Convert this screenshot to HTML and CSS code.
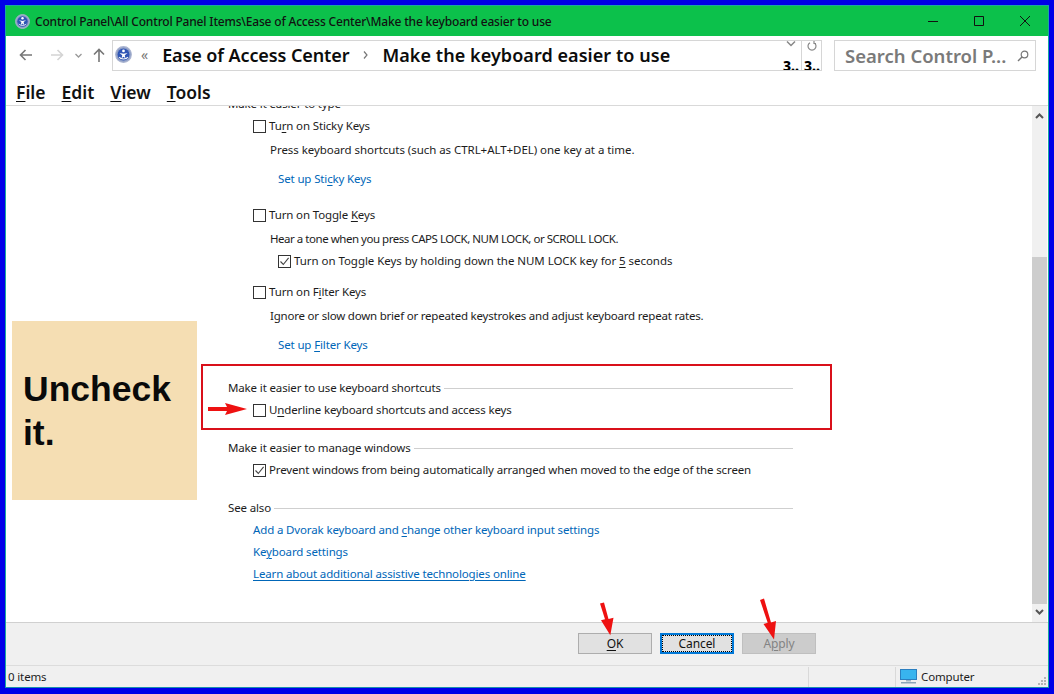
FILE: index.html
```html
<!DOCTYPE html>
<html lang="en">
<head>
<meta charset="utf-8">
<title>Make the keyboard easier to use</title>
<link rel="stylesheet" href="styles.css">
</head>
<body>
<svg class="defs" width="0" height="0" aria-hidden="true">
  <symbol id="ease" viewBox="0 0 16 16">
    <circle cx="8" cy="8" r="7.400" fill="#8f9fc6" stroke="#aab4d0" stroke-width="1"/>
    <circle cx="8" cy="8" r="5.600" fill="#2f55b5"/>
    <circle cx="8" cy="4.600" r="1.300" fill="#fff"/>
    <path d="M4.200 6.600 8 7.400l3.800-.8-2.600 2 .6 3L8 10l-1.800 1.600.6-3z" fill="#fff"/>
    <path d="M4 10.500c1.400 2.200 6.600 2.200 8 0" fill="none" stroke="#fff" stroke-width="1"/>
  </symbol>
  <symbol id="tick" viewBox="0 0 11 11">
    <path d="M1.500 5.500 4.300 8.500 9.600 1.800" fill="none" stroke="#444" stroke-width="1.100"/>
  </symbol>
</svg>

<div class="window">
  <header class="titlebar">
    <svg class="title-icon"><use href="#ease"/></svg>
    <span class="title-text">Control Panel\All Control Panel Items\Ease of Access Center\Make the keyboard easier to use</span>
    <div class="controls">
      <svg width="12" height="12" viewBox="0 0 12 12"><path d="M1 6.500h10" stroke="#111" fill="none"/></svg>
      <svg width="12" height="12" viewBox="0 0 12 12"><path d="M1.500 1.500h9v9h-9z" stroke="#111" fill="none"/></svg>
      <svg width="12" height="12" viewBox="0 0 12 12"><path d="M1 1l10 10M11 1 1 11" stroke="#111" fill="none"/></svg>
    </div>
  </header>

  <div class="navbar">
    <div class="nav-buttons">
      <svg class="nav-back" width="14" height="12" viewBox="0 0 14 12"><path d="M13 6H2M6.500 1 1.500 6l5 5" fill="none" stroke="#777" stroke-width="1.600"/></svg>
      <svg class="nav-fwd" width="14" height="12" viewBox="0 0 14 12"><path d="M1 6h11M7.500 1l5 5-5 5" fill="none" stroke="#d4d4d4" stroke-width="1.600"/></svg>
      <svg class="nav-recent" width="7" height="5" viewBox="0 0 7 5"><path d="M.5 1 3.500 4l3-3" fill="none" stroke="#999" stroke-width="1.300"/></svg>
      <svg class="nav-up" width="12" height="14" viewBox="0 0 12 14"><path d="M6 14V2M1 6.500l5-5 5 5" fill="none" stroke="#777" stroke-width="1.600"/></svg>
    </div>
    <div class="address">
      <svg class="addr-icon"><use href="#ease"/></svg>
      <span class="addr-more">«</span>
      <span class="crumb crumb-first">Ease of Access Center</span>
      <svg class="crumb-sep" width="5" height="8" viewBox="0 0 5 8"><path d="M1 .5 4 4 1 7.500" fill="none" stroke="#777" stroke-width="1.200"/></svg>
      <span class="crumb crumb-last">Make the keyboard easier to use</span>
      <div class="addr-cell addr-drop">
        <svg width="10" height="6" viewBox="0 0 10 6"><path d="M1 .5 5 4.500 9 .5" fill="none" stroke="#888" stroke-width="1.500"/></svg>
        <span class="frag">3..</span>
      </div>
      <div class="addr-cell addr-refresh">
        <svg width="10" height="10" viewBox="0 0 10 10"><path d="M3 1.700a4 4 0 1 0 4 0M7 0v2.500h2" fill="none" stroke="#888" stroke-width="1.200"/></svg>
        <span class="frag">3..</span>
      </div>
    </div>
    <div class="search">
      <span class="search-text">Search Control P...</span>
      <svg width="12" height="12" viewBox="0 0 12 12"><circle cx="7.500" cy="4.500" r="3.300" fill="none" stroke="#777" stroke-width="1.200"/><path d="M5 7 1 11" stroke="#777" stroke-width="1.500"/></svg>
    </div>
  </div>

  <nav class="menubar">
    <span><u>F</u>ile</span>
    <span><u>E</u>dit</span>
    <span><u>V</u>iew</span>
    <span><u>T</u>ools</span>
  </nav>

  <div class="content">
    <main class="page">
      <h2 class="heading clipped"><span>Make it easier to type</span></h2>

      <label class="check gap-6"><span class="box"></span><span>Tu<u>r</u>n on Sticky Keys</span></label>
      <p class="desc gap-8 caps-wide">Press keyboard shortcuts (such as CTRL+ALT+DEL) one key at a time.</p>
      <a class="link sub gap-13">Set up Sti<u>c</u>ky Keys</a>

      <label class="check gap-20"><span class="box"></span><span>Turn on Toggle <u>K</u>eys</span></label>
      <p class="desc gap-8 caps-narrow">Hear a tone when you press CAPS LOCK, NUM LOCK, or SCROLL LOCK.</p>
      <label class="check sub gap-6 caps-wide"><span class="box"><svg><use href="#tick"/></svg></span><span>Turn on Toggle Keys by holding down the NUM LOCK key for <u>5</u> seconds</span></label>

      <label class="check gap-15"><span class="box"></span><span>Turn on F<u>i</u>lter Keys</span></label>
      <p class="desc gap-8 snug">Ignore or slow down brief or repeated keystrokes and adjust keyboard repeat rates.</p>
      <a class="link sub gap-13">Set up <u>F</u>ilter Keys</a>

      <h2 class="heading gap-27"><span>Make it easier to use keyboard shortcuts</span></h2>
      <label class="check gap-6"><span class="box"></span><span>U<u>n</u>derline keyboard shortcuts and access keys</span></label>

      <h2 class="heading gap-22"><span>Make it easier to manage windows</span></h2>
      <label class="check gap-6"><span class="box"><svg><use href="#tick"/></svg></span><span>Prevent windows from being automatically arranged when moved to the edge of the screen</span></label>

      <h2 class="heading gap-22"><span>See also</span></h2>
      <a class="link also gap-6">Add a Dvorak keyboard and <u>c</u>hange other keyboard input settings</a>
      <a class="link also gap-6">Ke<u>y</u>board settings</a>
      <a class="link also gap-6 focus">Learn about additional assistive technologies online</a>
    </main>
    <aside class="scrollbar">
      <svg class="sb-up" width="9" height="6" viewBox="0 0 9 6"><path d="M1 5 4.500 1.500 8 5" fill="none" stroke="#555" stroke-width="2"/></svg>
      <div class="sb-thumb"></div>
      <svg class="sb-down" width="9" height="6" viewBox="0 0 9 6"><path d="M1 1l3.500 3.500L8 1" fill="none" stroke="#555" stroke-width="2"/></svg>
    </aside>
  </div>

  <footer class="actions">
    <button class="btn"><u>O</u>K</button>
    <button class="btn btn-focus"><span>Cancel</span></button>
    <button class="btn btn-off">A<u>p</u>ply</button>
  </footer>

  <div class="status">
    <span class="status-items">0 items</span>
    <span class="status-mid"></span>
    <span class="status-zone">
      <svg width="17" height="15" viewBox="0 0 17 15"><rect x=".5" y=".5" width="16" height="10" fill="#38b4ee" stroke="#2b7fc0"/><rect x="6" y="11" width="5" height="1.500" fill="#9fb3c4"/><rect x="1" y="13" width="15" height="1.500" fill="#8aa3b8"/></svg>
      <span>Computer</span>
    </span>
    <svg class="grip" width="9" height="9" viewBox="0 0 9 9" fill="#b5b5b5"><rect x="6" y="0" width="2" height="2"/><rect x="3" y="3" width="2" height="2"/><rect x="6" y="3" width="2" height="2"/><rect x="0" y="6" width="2" height="2"/><rect x="3" y="6" width="2" height="2"/><rect x="6" y="6" width="2" height="2"/></svg>
  </div>
</div>

<div class="note">Uncheck it.</div>
<div class="redbox"></div>
<svg class="arrows" width="1054" height="694" viewBox="0 0 1054 694">
  <g fill="#ee1111">
    <path d="M208 407h19l-2-4 22 6-22 6 2-4h-19z"/>
    <path d="M600 603.600l4-1 4.500 16.500 5-1.300-3.200 17.500-9.300-15 4-1z"/>
    <path d="M760 600l4-1.500 7 24 5-1.500-2 18.500-10.500-15.500 4.200-1.200z"/>
  </g>
</svg>
</body>
</html>
```
FILE: styles.css
```css
* { box-sizing: border-box; }
html, body { margin: 0; padding: 0; }
body {
  width: 1054px;
  height: 694px;
  background: #0000e8;
  padding: 5px 5px 6px;
  overflow: hidden;
  font-family: "Noto Sans", "Open Sans", sans-serif;
  font-size: 11.5px;
  letter-spacing: -.14px;
  color: #1c1c1c;
}
.defs { position: absolute; }
u { text-underline-offset: 2px; }

.window {
  height: 683px;
  display: flex;
  flex-direction: column;
  background: #fff;
  border: 1px solid #1aa8a0;
  border-bottom-color: #1a8fb0;
}

/* title bar */
.titlebar {
  height: 30px;
  flex: none;
  display: flex;
  align-items: center;
  background: #0cc14b;
  padding-left: 9px;
}
.title-icon { width: 15px; height: 15px; flex: none; }
.title-text {
  margin-left: 5px;
  font-size: 12px;
  font-weight: 500;
  color: #111;
  white-space: nowrap;
  letter-spacing: -.18px;
}
.controls {
  margin-left: auto;
  margin-right: 17px;
  display: flex;
  gap: 34px;
}

/* address row */
.navbar {
  height: 41px;
  flex: none;
  display: flex;
  align-items: flex-start;
  padding-top: 4px;
  padding-left: 106px;
  position: relative;
}
.nav-buttons {
  position: absolute;
  left: 13px;
  top: 12px;
  display: flex;
  align-items: center;
}
.nav-fwd { margin-left: 17px; }
.nav-recent { margin-left: 11px; }
.nav-up { margin-left: 11px; }

.address {
  width: 710px;
  height: 31px;
  flex: none;
  display: flex;
  align-items: center;
  border: 1px solid #d6d6d6;
  padding: 0 0 2px 2px;
  font-size: 18px;
  font-weight: 600;
  letter-spacing: 0;
  color: #0c0c0c;
}
.addr-icon { width: 17px; height: 17px; flex: none; }
.addr-more {
  margin-left: 9px;
  font-size: 14px;
  font-weight: 400;
  color: #777;
  line-height: 1;
}
.crumb { white-space: nowrap; }
.crumb-first { margin-left: 14px; letter-spacing: -.1px; }
.crumb-last { letter-spacing: .06px; }
.crumb-sep { margin: 0 14px; flex: none; }
.addr-cell {
  width: 20px;
  height: 29px;
  flex: none;
  align-self: flex-start;
  overflow: hidden;
  display: flex;
  flex-direction: column;
  align-items: center;
  position: relative;
}
.addr-cell svg { flex: none; }
.addr-drop { margin-left: auto; }
.addr-refresh { border-left: 1px solid #d6d6d6; }
.frag {
  position: absolute;
  left: 2px;
  top: 17px;
  font-size: 14px;
  line-height: 16px;
  font-weight: 800;
  color: #000;
  letter-spacing: 0;
}
.search {
  width: 202px;
  height: 31px;
  margin-left: 12px;
  flex: none;
  display: flex;
  align-items: center;
  justify-content: space-between;
  border: 1px solid #d6d6d6;
  padding: 0 6px 0 10px;
  font-size: 18.500px;
  font-weight: 600;
  letter-spacing: 0;
  color: #7a7a7a;
}
.search-text { white-space: nowrap; }

/* menu */
.menubar {
  height: 29px;
  flex: none;
  display: flex;
  align-items: center;
  padding: 1px 0 0 10px;
  gap: 16px;
  font-size: 17.500px;
  font-weight: 600;
  letter-spacing: 0;
  color: #111;
  border-bottom: 1px solid #d9d9d9;
}

/* content */
.content {
  flex: 1;
  min-height: 0;
  display: flex;
  background: #fff;
}
.page {
  flex: 1;
  min-width: 0;
  overflow: hidden;
  display: flex;
  flex-direction: column;
  align-items: flex-start;
  padding-left: 222px;
}
.page > * { height: 16px; line-height: 16px; white-space: nowrap; flex: none; }
.heading {
  width: 565px;
  margin: 0;
  font-size: inherit;
  font-weight: 400;
  display: flex;
  align-items: center;
  gap: 3px;
}
.heading::after {
  content: "";
  flex: 1;
  height: 1px;
  background: #cfcfcf;
}
.clipped { margin-top: -10px; }
.check {
  margin-left: 25px;
  display: flex;
  align-items: center;
}
.box {
  width: 13px;
  height: 13px;
  flex: none;
  margin-right: 3px;
  border: 1px solid #333;
  background: #fff;
  display: block;
}
.box svg { display: block; width: 11px; height: 11px; }
.desc { margin: 0 0 0 42px; }
.link { color: #0066b8; }
.link.sub { margin-left: 50px; }
.check.sub { margin-left: 50px; }
.link.also { margin-left: 25px; }
.focus { text-decoration: underline; text-underline-offset: 2px; }

.caps-wide { letter-spacing: -.05px; }
.caps-narrow { letter-spacing: -.47px; }
.snug { letter-spacing: -.21px; }

.gap-6  { margin-top: 6px; }
.gap-8  { margin-top: 8px; }
.gap-13 { margin-top: 13px; }
.gap-15 { margin-top: 15px; }
.gap-20 { margin-top: 20px; }
.gap-22 { margin-top: 22px; }
.gap-27 { margin-top: 27px; }

/* scrollbar */
.scrollbar {
  width: 15px;
  flex: none;
  margin-right: 1px;
  background: #f0f0f0;
  display: flex;
  flex-direction: column;
  align-items: center;
}
.sb-up { margin-top: 7px; flex: none; }
.sb-thumb {
  width: 15px;
  height: 347px;
  flex: none;
  margin-top: 138px;
  background: #cdcdcd;
}
.sb-down { margin-top: 5px; flex: none; }

/* buttons */
.actions {
  height: 43px;
  flex: none;
  display: flex;
  gap: 8px;
  padding: 10px 0 0 572px;
  background: #f0f0f0;
  border-top: 1px solid #d0d0d0;
}
.btn {
  width: 74px;
  height: 21px;
  padding: 0;
  border: 1px solid #adadad;
  background: #e1e1e1;
  font-family: inherit;
  font-size: 12px;
  letter-spacing: -.1px;
  color: #111;
  line-height: 17px;
}
.btn-focus { border: 2px solid #0078d7; }
.btn-focus span {
  display: block;
  height: 17px;
  border: 1px dotted #000;
  line-height: 15px;
}
.btn-off {
  background: #cccccc;
  border-color: #bfbfbf;
  color: #838383;
}

/* status bar */
.status {
  height: 22px;
  flex: none;
  display: flex;
  align-items: center;
  background: #f0f0f0;
  border-top: 1px solid #dcdcdc;
  position: relative;
}
.status-items { width: 802px; padding-left: 2px; flex: none; }
.status-mid {
  width: 88px;
  height: 20px;
  flex: none;
  border-left: 1px solid #d9d9d9;
  border-right: 1px solid #d9d9d9;
}
.status-zone {
  display: flex;
  align-items: center;
  gap: 4px;
  padding-left: 4px;
}
.grip { position: absolute; right: 1px; bottom: 1px; }

/* annotations */
.note {
  position: absolute;
  left: 12px;
  top: 321px;
  width: 185px;
  height: 179px;
  display: flex;
  align-items: center;
  padding-left: 11px;
  background: #f5deb3;
  font-family: "Liberation Sans", Arial, sans-serif;
  font-size: 35.500px;
  font-weight: 700;
  line-height: 44px;
  letter-spacing: 0;
  color: #0a0a0a;
}
.redbox {
  position: absolute;
  left: 201px;
  top: 364px;
  width: 631px;
  height: 66px;
  border: 2px solid #d9101a;
}
.arrows { position: absolute; left: 0; top: 0; pointer-events: none; }
```
